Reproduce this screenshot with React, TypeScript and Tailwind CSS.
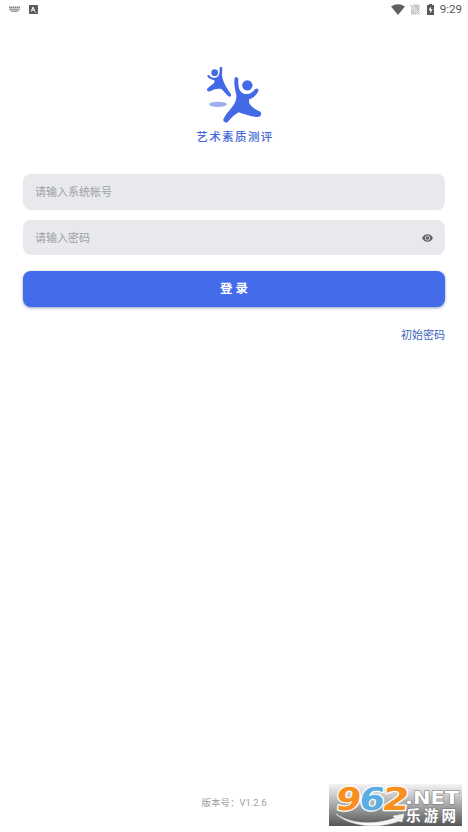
import { useState } from 'react';

const fontClass = "font-['Roboto','Noto_Sans_CJK_SC',sans-serif]";

function StatusBar() {
  return (
    <div className="flex h-[19px] items-center justify-between pl-[9px] pr-[6px] text-[#616161]">
      <div className="flex items-center gap-[9px]">
        {/* Keyboard */}
        <svg width="11" height="7" viewBox="0 0 11 7">
          <path d="M0 1.4h11M0.5 3.6h10" stroke="#808080" strokeWidth="1.6" strokeDasharray="1.5 0.4" />
          <path d="M2 5.4h7" stroke="#999" strokeWidth="1.1" />
        </svg>
        {/* Input method */}
        <svg width="9" height="9" viewBox="0 0 9 9">
          <rect width="9" height="9" rx="0.6" fill="#5c5c5c" />
          <path d="M2.2 6.6l1.9-4.6 1.9 4.6M2.9 5.1h2.4" fill="none" stroke="#fff" strokeWidth="1" />
          <path d="M6 7.5h2" stroke="#aaa" strokeWidth="0.8" />
        </svg>
      </div>
      <div className="flex items-center">
        <svg width="14" height="11" viewBox="0 0 14 11">
          <path d="M0 2.6C4-.7 10-.7 14 2.6L7 11z" fill="#616161" />
        </svg>
        <svg className="ml-[5px]" width="10" height="11" viewBox="0 0 10 11">
          <path d="M3.5 .5h6v10H1V3z" fill="#cacaca" />
          <path d="M.3 1l9.2 9.5" stroke="#fff" strokeWidth="2.2" />
          <path d="M.3 1l9.2 9.5" stroke="#a2a2a2" strokeWidth="1" />
        </svg>
        <svg className="ml-[7px]" width="7" height="11" viewBox="0 0 7 11">
          <path d="M2 0h3v1h2v10H0V1h2z" fill="#595959" />
          <path d="M4 2.5L1.5 6.3h1.7v2.9L5.7 5.3H4z" fill="#fff" />
        </svg>
        <span className="ml-[6px] text-[11.5px] leading-[19px] text-[#555]">9:29</span>
      </div>
    </div>
  );
}

function Logo() {
  return (
    <div className="mt-[44px] flex flex-col items-center">
      <svg className="ml-[2px]" width="60" height="62" viewBox="48 9 180 186" fill="#4369e6">
        {/* Small dancer */}
        <circle cx="77" cy="38" r="10" />
        <path d="M92 23C94 18 101 20 100 26C99 38 98 48 102 60C107 74 115 87 126 103C128 108 123 112 118 109C111 102 105 94 97 87C88 85 77 86 63 94C58 96 53 93 54 88C56 84 67 76 75 69C77 65 77 62 75 60C68 60 61 56 56 51C53 47 58 43 62 47C68 54 78 55 86 50C92 44 92 34 92 23Z" />
        {/* Large dancer */}
        <circle cx="175" cy="76" r="15.5" />
        <path d="M137 54C141 48 147 51 148 58C147 77 149 91 159 98C174 107 188 101 198 88C203 83 210 87 208 93C202 106 193 114 181 118C179 122 180 127 182 132C191 144 203 151 214 155C220 162 215 171 206 171C187 170 167 164 149 157C138 163 128 172 116 186C110 190 102 186 103 178C110 163 121 152 131 139C139 129 143 118 142 105C138 89 134 72 137 54Z" />
        <ellipse cx="87" cy="133" rx="27" ry="7.8" fill="#9bb0ed" />
      </svg>
      <h1 className="mt-[3px] pl-[2px] text-[11.5px] leading-[18px] font-medium tracking-[1.4px] text-[#4467da]">
        艺术素质测评
      </h1>
    </div>
  );
}

function EyeIcon() {
  return (
    <svg width="11" height="8" viewBox="0 0 22 16">
      <path d="M11 .5C6 .5 2 3.5.3 8 2 12.5 6 15.5 11 15.5S20 12.5 21.7 8C20 3.5 16 .5 11 .5z" fill="#5f6064" />
      <circle cx="11" cy="8" r="4.4" fill="none" stroke="#e8e9ed" strokeWidth="1.8" />
    </svg>
  );
}

function Watermark() {
  return (
    <svg className="absolute left-[329px] top-[784px] overflow-visible" width="133" height="42" viewBox="0 0 133 42">
      <defs>
        <linearGradient id="plate" x1="0" y1="0" x2="0" y2="1">
          <stop offset="0" stopColor="#f4f4f4" />
          <stop offset="0.5" stopColor="#a8a8a8" />
          <stop offset="1" stopColor="#555" />
        </linearGradient>
        <linearGradient id="swoosh" x1="0" y1="0" x2="1" y2="0">
          <stop offset="0" stopColor="#ccc" />
          <stop offset="0.4" stopColor="#fff" />
          <stop offset="1" stopColor="#eee" />
        </linearGradient>
      </defs>
      <rect width="133" height="42" fill="url(#plate)" />
      <g
        transform="translate(5 26) skewX(-8)"
        fontFamily="'DejaVu Sans', sans-serif"
        fontSize="31.5"
        fontWeight="700"
        stroke="#fff"
        strokeWidth="2.4"
        paintOrder="stroke"
        strokeLinejoin="round"
      >
        <text x="0.5" y="0" fill="#f7901e" textLength="25.5" lengthAdjust="spacingAndGlyphs">9</text>
        <text x="24" y="0" fill="#5aaee2" textLength="25.5" lengthAdjust="spacingAndGlyphs">6</text>
        <text x="47" y="0" fill="#f7901e" textLength="27" lengthAdjust="spacingAndGlyphs">2</text>
      </g>
      <path d="M7 30C23 41 48 41 66 34L64 32L75 30L73 38L70 37C50 45 22 43 7 30Z" fill="url(#swoosh)" stroke="#eee" strokeWidth="0.6" />
      <g fill="#fff" stroke="#777" strokeWidth="1" paintOrder="stroke" fontWeight="700">
        <text x="76" y="19.5" fontFamily="'DejaVu Sans', sans-serif" fontSize="17.5" textLength="54" lengthAdjust="spacingAndGlyphs">.NET</text>
        <text x="77" y="37" fontFamily="'Noto Sans CJK SC', sans-serif" fontSize="14.5" textLength="50">乐游网</text>
      </g>
    </svg>
  );
}

export default function App() {
  const [showPassword, setShowPassword] = useState(false);

  const inputClass =
    'min-w-0 flex-1 bg-transparent text-[11px] text-[#666] outline-none placeholder:text-[#a0a1a4]';

  return (
    <div className={`relative flex h-[832px] w-[468px] flex-col overflow-hidden bg-white ${fontClass}`}>
      <StatusBar />
      <Logo />

      <form className="mt-[28px] flex flex-col px-[23px]" onSubmit={(e) => e.preventDefault()}>
        <div className="flex h-[35.5px] items-center rounded-[8px] bg-[#e8e9ed] px-[12px] pt-[2px]">
          <input className={inputClass} placeholder="请输入系统帐号" />
        </div>

        <div className="mt-[10px] flex h-[35.5px] items-center rounded-[8px] bg-[#e8e9ed] px-[12px] pt-[2px]">
          <input
            className={`${inputClass} pt-[2px]`}
            type={showPassword ? 'text' : 'password'}
            placeholder="请输入密码"
          />
          <button type="button" aria-label="显示密码" onClick={() => setShowPassword(!showPassword)}>
            <EyeIcon />
          </button>
        </div>

        <button
          type="submit"
          className="mt-[16px] h-[36px] rounded-[8px] bg-[#446bea] text-[12.5px] font-bold text-white shadow-[0_1px_3px_rgba(50,75,140,0.55)]"
        >
          登 录
        </button>

        <a className="mt-[20px] self-end text-[11px] leading-[18px] text-[#4264bd]" href="#">
          初始密码
        </a>
      </form>

      <p className="mt-auto mb-[20px] text-center text-[9.5px] leading-[18px] text-[#a0a0a0]">版本号：V1.2.6</p>

      <Watermark />
    </div>
  );
}
